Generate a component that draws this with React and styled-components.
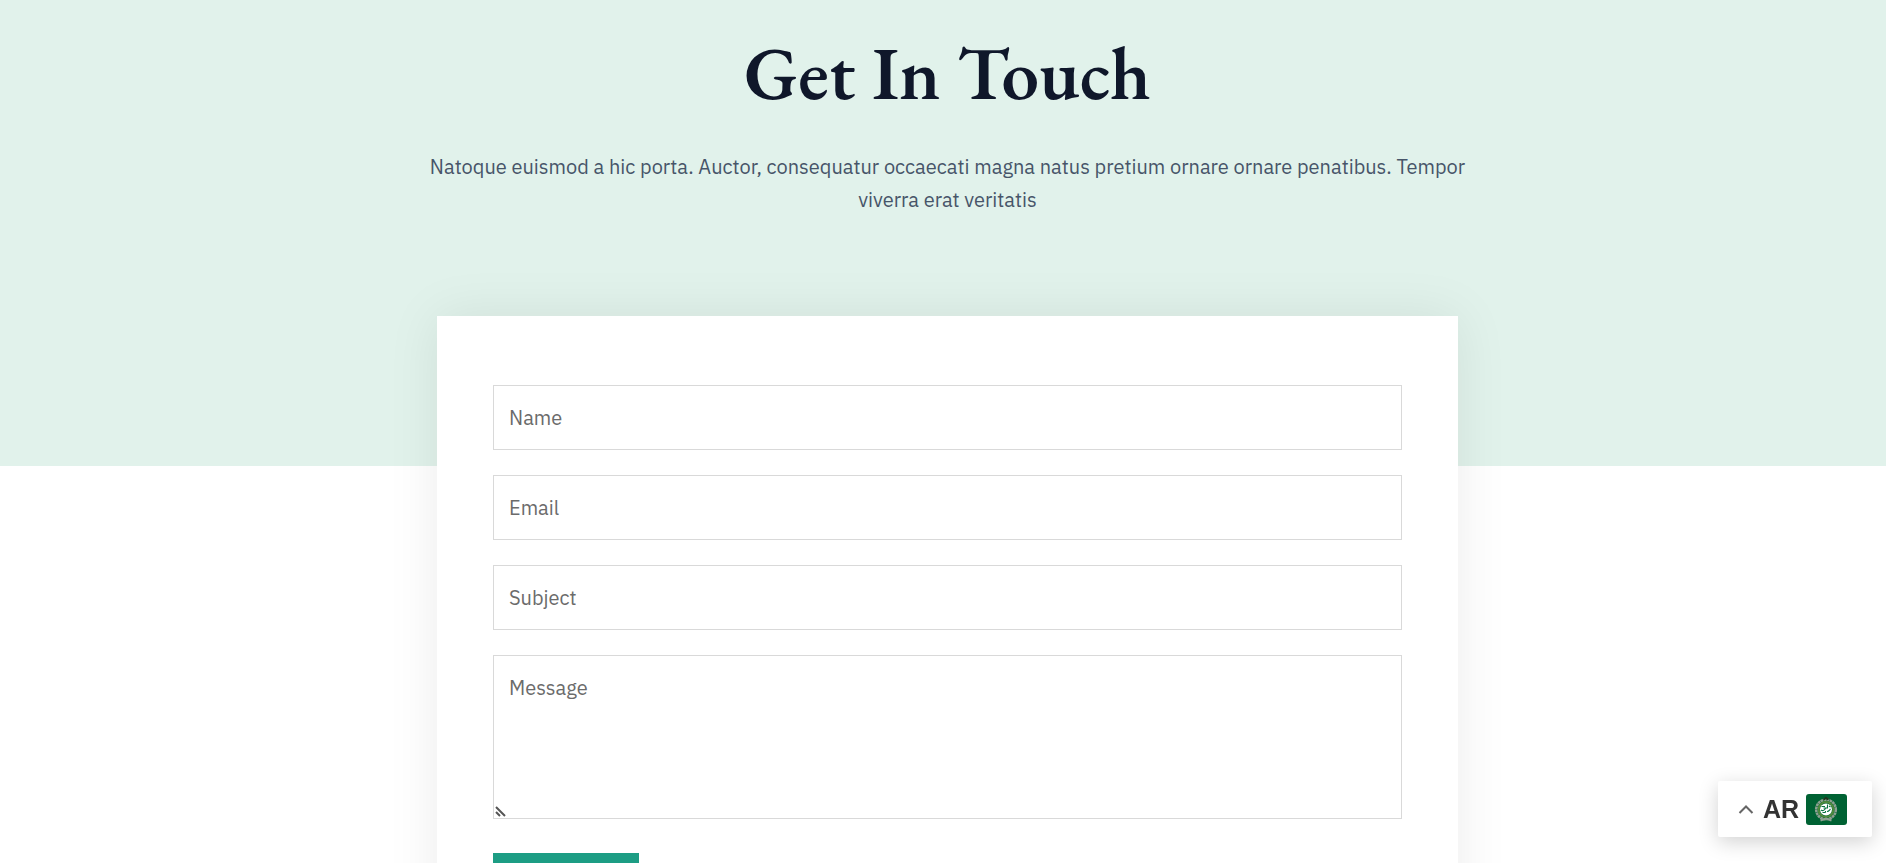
import React from "react";
import styled, { createGlobalStyle, css } from "styled-components";

const GlobalStyle = createGlobalStyle`
  *, *::before, *::after { box-sizing: border-box; }
  body {
    margin: 0;
    background: #fff;
    color: #475569;
    font-family: "IBM Plex Sans", "Noto Sans", sans-serif;
    font-size: 20px;
    line-height: 33px;
  }
`;

const Page = styled.main`
  padding-bottom: 80px;
`;

const Hero = styled.header`
  padding: 32px 0 250px 9px;
  background: #e1f2eb;
  text-align: center;
`;

const Title = styled.h1`
  margin: 0 0 38px;
  color: #0f172a;
  font: 600 75px/80px "EB Garamond", "Liberation Serif", serif;
`;

const Intro = styled.p`
  max-width: 1045px;
  margin: 0 auto;
`;

const FormArea = styled.section`
  padding-left: 9px;
  margin-top: -150px;
`;

const Card = styled.form`
  display: flex;
  flex-direction: column;
  gap: 25px;
  max-width: 1021px;
  margin: 0 auto;
  padding: 69px 56px;
  background: #fff;
  box-shadow: 0 0 50px rgba(0, 0, 0, 0.08);
`;

const field = css`
  display: block;
  width: 100%;
  padding: 15px;
  border: 1px solid #d9d9d9;
  border-radius: 0;
  background: #fff;
  color: #475569;
  font: inherit;
  text-align: left;
  &::placeholder { color: #6b6b6b; opacity: 1; }
`;

const TextInput = styled.input`
  ${field}
  height: 65px;
`;

const MessageField = styled.div`
  position: relative;
`;

const MessageBox = styled.textarea`
  ${field}
  height: 164px;
  resize: vertical;
  &::-webkit-resizer {
    background: transparent;
  }
`;

const ResizeGrip = styled.svg`
  position: absolute;
  left: 2px;
  bottom: 2px;
  width: 11px;
  height: 11px;
  pointer-events: none;
`;

const SubmitButton = styled.button`
  align-self: flex-start;
  width: 146px;
  height: 62px;
  margin-top: 9px;
  border: 0;
  background: #1d9d84;
  color: #fff;
  font: inherit;
  cursor: pointer;
`;

const LanguageSwitcher = styled.button`
  position: fixed;
  right: 14px;
  bottom: 26px;
  display: flex;
  align-items: center;
  width: 154px;
  height: 56px;
  padding: 0 20px;
  border: 0;
  border-radius: 2px;
  background: #fff;
  box-shadow: 0 5px 20px rgba(0, 0, 0, 0.18);
  color: #333;
  font: 700 25px/32px "Liberation Sans", Arial, sans-serif;
  cursor: pointer;
`;

const Chevron = styled.svg`
  width: 16px;
  height: 16px;
  margin-right: 9px;
`;

const Flag = styled.svg`
  width: 41px;
  height: 31px;
  margin-left: 7px;
  border-radius: 3px;
`;

function LeagueFlag() {
  return (
    <Flag viewBox="0 0 41 31" aria-hidden="true">
      <rect width="41" height="31" fill="#006233" />
      <g fill="none">
        <circle cx="20" cy="15.500" r="9.800" stroke="#8fa092" strokeWidth="2.600" strokeDasharray="2.600 0.500" />
        <circle cx="20" cy="15.500" r="7.400" stroke="#4f8a3c" strokeWidth="2" />
        <path d="M17.500 5.600 20 4l2.500 1.600" stroke="#20371f" strokeWidth="2" />
        <path d="m14.500 26.500 5.500-2 5.500 2" stroke="#8fa092" strokeWidth="2" />
      </g>
      <circle cx="20" cy="15.500" r="6" fill="#fff" />
      <g fill="none" stroke="#087340" strokeWidth="1.100">
        <path d="M15.500 12.500h3.500M21.500 10.500v3.500h-4M15 16c2 1.500 3.500 0 4.500-1.500M21 17.500c2 0 2.500-1.500 3.500-2.500M16.500 18.500h3M23 12l1.500 1M19.500 17v1.500" />
      </g>
    </Flag>
  );
}

export default function App() {
  return (
    <>
      <GlobalStyle />
      <Page>
        <Hero>
          <Title>Get In Touch</Title>
          <Intro>
            Natoque euismod a hic porta. Auctor, consequatur occaecati magna natus pretium ornare
            ornare penatibus. Tempor viverra erat veritatis
          </Intro>
        </Hero>
        <FormArea>
          <Card>
            <TextInput type="text" name="name" placeholder="Name" aria-label="Name" />
            <TextInput type="email" name="email" placeholder="Email" aria-label="Email" />
            <TextInput type="text" name="subject" placeholder="Subject" aria-label="Subject" />
            <MessageField>
              <MessageBox dir="rtl" name="message" placeholder="Message" aria-label="Message" />
              <ResizeGrip viewBox="0 0 11 11" aria-hidden="true">
                <path d="m1 1 9 9M1 6l4 4" fill="none" stroke="#555" strokeWidth="2" />
              </ResizeGrip>
            </MessageField>
            <SubmitButton type="submit" aria-label="Send" />
          </Card>
        </FormArea>
      </Page>
      <LanguageSwitcher type="button">
        <Chevron viewBox="0 0 16 16" aria-hidden="true">
          <path d="m1.500 12 6.500-6.500 6.500 6.500" fill="none" stroke="#666" strokeWidth="2" />
        </Chevron>
        AR
        <LeagueFlag />
      </LanguageSwitcher>
    </>
  );
}
